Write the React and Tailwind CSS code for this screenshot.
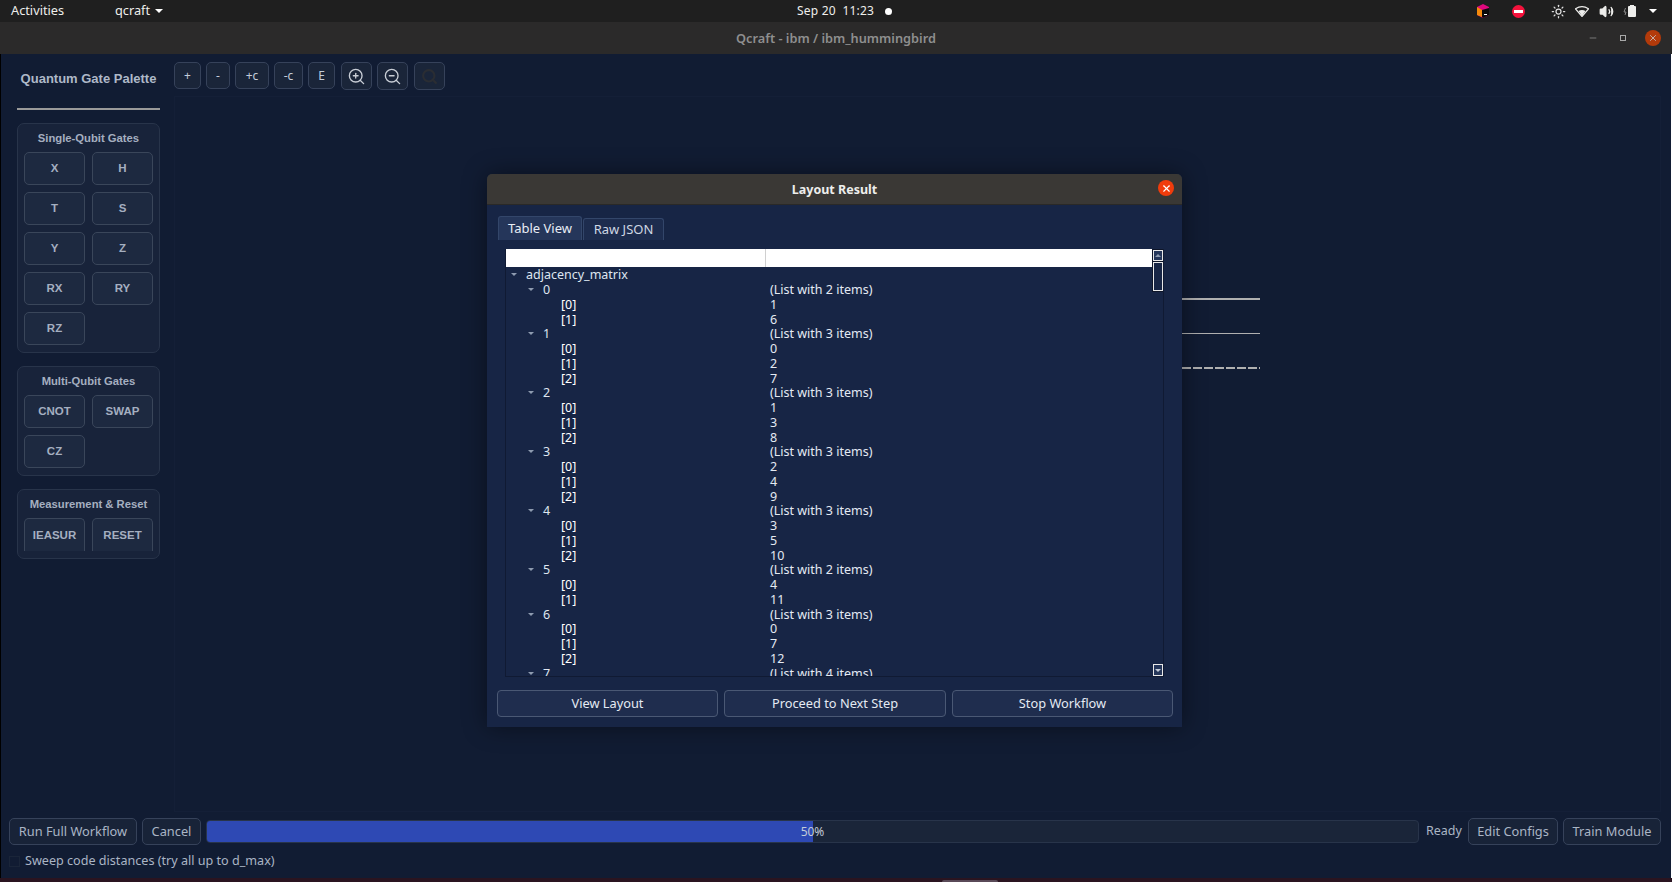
import React from "react";
import { ZoomIn, ZoomOut, Search, Sun, Volume2, X, Minus } from "lucide-react";

const ubuntu = "font-['Noto_Sans',sans-serif]";

const toolButtons = [
  { label: "+", w: "w-[27px]" },
  { label: "-", w: "w-[24px]" },
  { label: "+c", w: "w-[34px]" },
  { label: "-c", w: "w-[29px]" },
  { label: "E", w: "w-[27px]" },
];

const gateGroups = [
  { title: "Single-Qubit Gates", gates: ["X", "H", "T", "S", "Y", "Z", "RX", "RY", "RZ"] },
  { title: "Multi-Qubit Gates", gates: ["CNOT", "SWAP", "CZ"] },
  { title: "Measurement & Reset", gates: ["IEASUR", "RESET"], clipped: true },
];

const matrix = [
  [1, 6],
  [0, 2, 7],
  [1, 3, 8],
  [2, 4, 9],
  [3, 5, 10],
  [4, 11],
  [0, 7, 12],
];

const GateGroup = ({ title, gates, clipped }) => (
  <div className="border border-[#28344a] rounded-[7px] bg-[#18233a] px-[6px] pt-[6px] pb-[7px]">
    <div className="h-[16px] leading-[16px] mb-[6px] text-center text-[11.25px] font-bold text-[#a5afc0] whitespace-nowrap">
      {title}
    </div>
    <div className="grid grid-cols-2 gap-x-[7px] gap-y-[7px]">
      {gates.map((gate) => (
        <button
          key={gate}
          className={`h-[33px] w-[61px] pt-px border border-[#3a465a] rounded-[5px] bg-[#1d2940] text-[11.5px] font-bold text-[#a5afc0] ${
            clipped ? "border-b-0 rounded-b-none" : ""
          }`}
        >
          {gate}
        </button>
      ))}
    </div>
  </div>
);

const TreeRow = ({ indent, arrow, name, value, bright }) => (
  <div className="flex h-[14.75px] items-center leading-[14px] whitespace-nowrap">
    <div className={`relative w-[260px] shrink-0 ${indent}`}>
      {arrow && (
        <span className="absolute mt-[5px] -ml-[15px] w-0 h-0 border-x-[3px] border-x-transparent border-t-[3px] border-t-[#8e9bb0]" />
      )}
      <span className={bright ? "text-white" : "text-[#dfe6f0]"}>{name}</span>
    </div>
    <span className="text-[#e4eaf3] pl-[4px]">{value}</span>
  </div>
);

const ListNode = ({ index, items }) => (
  <>
    <TreeRow indent="pl-[37px]" arrow name={index} value={`(List with ${items.length} items)`} />
    {items.map((item, i) => (
      <TreeRow key={i} indent="pl-[55px]" name={`[${i}]`} value={item} bright />
    ))}
  </>
);

const DialogButton = ({ children, w }) => (
  <button className={`h-[27px] ${w} pt-px border border-[#4a5874] rounded-[4px] bg-[#1f2d4e] text-[12.8px] text-[#e4eaf3]`}>
    {children}
  </button>
);

const LayoutDialog = () => (
  <div className={`absolute left-[487px] top-[174px] w-[695px] h-[553px] flex flex-col rounded-t-[5px] bg-[#172545] shadow-[0_0_24px_rgba(0,0,0,0.45)] ${ubuntu}`}>
    <div className="relative h-[31px] pt-[2px] shrink-0 flex items-center justify-center rounded-t-[5px] bg-[#3a3835] border-b border-[#2a2927] text-[12.5px] font-bold text-[#eeeeec]">
      Layout Result
      <span className="absolute right-[8px] top-[6px] w-[16px] h-[16px] rounded-full bg-[#f13c0c] flex items-center justify-center">
        <X size={11} strokeWidth={2.5} className="text-white" />
      </span>
    </div>
    <div className="flex items-end h-[35px] shrink-0 pl-[11px] gap-[1px] text-[13px]">
      <div className="h-[24px] w-[84px] flex items-center justify-center rounded-t-[3px] border border-b-0 border-[#33466a] bg-[#25365a] text-[#e8edf5]">
        Table View
      </div>
      <div className="h-[22px] w-[81px] flex items-center justify-center rounded-t-[3px] border border-b-0 border-[#33466a] bg-[#1d2c4e] text-[#cfd7e4]">
        Raw JSON
      </div>
    </div>
    <div className="ml-[18px] mt-[9px] w-[659px] h-[428px] shrink-0 flex overflow-hidden border-r border-b border-l border-[#101a33] text-[12.5px]">
      <div className="w-[646px] shrink-0">
        <div className="flex h-[18px] mb-px bg-white">
          <div className="w-[260px] border-r border-[#d0d0d0]" />
        </div>
        <TreeRow indent="pl-[20px]" arrow name="adjacency_matrix" />
        {matrix.map((items, i) => (
          <ListNode key={i} index={i} items={items} />
        ))}
        <TreeRow indent="pl-[37px]" arrow name={7} value="(List with 4 items)" />
      </div>
      <div className="w-[11px] shrink-0 flex flex-col">
        <div className="h-[43px] pt-px bg-[#0e1528]">
          <div className="h-[11px] ml-px border border-[#e8e8e8] bg-[#25365a] flex items-center justify-center">
            <span className="w-0 h-0 border-x-[3px] border-x-transparent border-b-[3px] border-b-[#8e9bb0]" />
          </div>
          <div className="h-[29px] ml-px mt-px border border-[#e8e8e8] bg-[#172545]" />
        </div>
        <div className="flex-1" />
        <div className="h-[12px] ml-px border border-[#e8e8e8] bg-[#25365a] flex items-center justify-center">
          <span className="w-0 h-0 border-x-[3px] border-x-transparent border-t-[3px] border-t-[#c4ccd8]" />
        </div>
      </div>
    </div>
    <div className="mt-[13px] pl-[10px] flex gap-[6px]">
      <DialogButton w="w-[221px]">View Layout</DialogButton>
      <DialogButton w="w-[222px]">Proceed to Next Step</DialogButton>
      <DialogButton w="w-[221px]">Stop Workflow</DialogButton>
    </div>
  </div>
);

const BottomButton = ({ children, w }) => (
  <button className={`h-[27px] ${w} shrink-0 border border-[#36425a] rounded-[5px] bg-[#182338] text-[12.8px] text-[#aab5c5] whitespace-nowrap`}>
    {children}
  </button>
);

const SystemBar = () => (
  <div className={`relative h-[22px] shrink-0 flex items-center bg-[#1f1f1f] text-[12.75px] text-[#eeeeec] ${ubuntu}`}>
    <span className="ml-[11px] w-[104px]">Activities</span>
    <span>qcraft</span>
    <span className="ml-[5px] w-0 h-0 border-x-[4px] border-x-transparent border-t-[4px] border-t-white" />
    <div className="absolute left-[797px] top-0 h-[22px] flex items-center text-[12px]">
      <span className="tracking-[0.2px]">Sep 20&nbsp;&nbsp;11:23</span>
      <span className="ml-[11px] w-[7px] h-[7px] rounded-full bg-white" />
    </div>
    <div className="ml-auto flex items-center h-[22px]">
      <svg width="14" height="14" viewBox="0 0 14 14">
        <polygon points="7,0 13,3 13,11 7,14 1,11 1,3" fill="#e0087e" />
        <polygon points="1,3 6,6 6,13 1,11" fill="#f58a0b" />
        <polygon points="6,6 13,4 13,11 7,14 6,13" fill="#0a0a0a" />
        <rect x="8" y="10" width="3" height="1" fill="#fff" />
      </svg>
      <span className="ml-[22px] w-[13px] h-[13px] rounded-full bg-[#f3123c] flex items-center justify-center">
        <span className="w-[9px] h-[3px] bg-white" />
      </span>
      <Sun size={15} strokeWidth={2} className="ml-[26px] text-[#dedede]" />
      <svg className="ml-[9px]" width="14" height="11" viewBox="0 0 14 11">
        <path d="M0.5 2.8 Q7 -1.4 13.5 2.8 L7 10.5 Z" fill="none" stroke="#eeeeec" strokeWidth="1.2" />
        <path d="M3.5 5 Q7 3 10.5 5 L7 10 Z" fill="#eeeeec" />
      </svg>
      <Volume2 size={15} strokeWidth={2} className="ml-[10px] text-[#eeeeec] fill-current" />
      <svg className="ml-[9px]" width="14" height="14" viewBox="0 0 14 14">
        <path d="M2.5 4 L1 8 L3 8 L2 11" fill="none" stroke="#8a8a8a" strokeWidth="1" />
        <rect x="5" y="2" width="8" height="11" rx="1" fill="#eeeeec" />
        <rect x="7" y="1" width="4" height="1" fill="#eeeeec" />
      </svg>
      <span className="ml-[12px] mr-[15px] w-0 h-0 border-x-[4px] border-x-transparent border-t-[4px] border-t-white" />
    </div>
  </div>
);

const TitleBar = () => (
  <div className={`relative h-[32px] pt-[2px] shrink-0 flex items-center justify-center bg-[#2b2a2a] text-[12.75px] font-semibold text-[#8f8f8f] ${ubuntu}`}>
    Qcraft - ibm / ibm_hummingbird
    <div className="absolute right-[11px] top-[8px] flex items-center">
      <Minus size={10} strokeWidth={1.5} className="text-[#a8a8a8] mr-[22px]" />
      <span className="w-[6px] h-[6px] mr-[19px] border border-[#a8a8a8]" />
      <span className="w-[16px] h-[16px] rounded-full bg-[#b33a0a] flex items-center justify-center">
        <X size={10} strokeWidth={2} className="text-[#c8c8c8]" />
      </span>
    </div>
  </div>
);

export default function App() {
  return (
    <div className="relative w-[1672px] h-[882px] overflow-hidden flex flex-col bg-[#111c33] font-['Liberation_Sans',sans-serif]">
      <SystemBar />
      <TitleBar />
      <div className="flex-1 min-h-0 flex border-l border-l-black border-r border-r-white">
        <div className="w-[173px] shrink-0 pl-[16px] pr-[14px]">
          <div className="h-[56px] pt-[17px] border-b-2 border-[#9a9a9a] text-center text-[13px] leading-[16px] font-bold text-[#aeb8c8] whitespace-nowrap">
            Quantum Gate Palette
          </div>
          <div className="mt-[13px] flex flex-col gap-[13px]">
            {gateGroups.map((group) => (
              <GateGroup key={group.title} {...group} />
            ))}
          </div>
        </div>
        <div className="flex-1 min-w-0 pr-[10px]">
          <div className={`flex h-[42px] pt-[8px] gap-[5px] text-[12px] text-[#c3ccd9] ${ubuntu}`}>
            {toolButtons.map((b) => (
              <button key={b.label} className={`h-[27px] ${b.w} border border-[#36425a] rounded-[5px] bg-[#1a2539]`}>
                {b.label}
              </button>
            ))}
            <button className="h-[28px] w-[31px] ml-px flex items-center justify-center border border-[#36425a] rounded-[5px] bg-[#1a2539]">
              <ZoomIn size={19} strokeWidth={1.7} className="text-[#c9ced6]" />
            </button>
            <button className="h-[28px] w-[31px] flex items-center justify-center border border-[#36425a] rounded-[5px] bg-[#1a2539]">
              <ZoomOut size={19} strokeWidth={1.7} className="text-[#c9ced6]" />
            </button>
            <button className="h-[28px] w-[31px] ml-px flex items-center justify-center border border-[#36425a] rounded-[5px] bg-[#1a2539]">
              <Search size={17} strokeWidth={3} className="text-[#2a2d33]" />
            </button>
          </div>
          <div className="relative h-[716px] border border-[#141f37]">
            <div className="absolute left-[1007px] top-[201px] w-[78px] h-[2px] bg-[#b0b0b0]" />
            <div className="absolute left-[1007px] top-[236px] w-[78px] h-px bg-[#b0b0b0]" />
            <div className="absolute left-[1007px] top-[270px] w-[78px] h-[2px] bg-[repeating-linear-gradient(90deg,#b0b0b0_0_9px,transparent_9px_11px)]" />
          </div>
        </div>
      </div>
      <div className={`h-[66px] shrink-0 border-l border-l-black border-r border-r-white px-[8px] pt-[6px] ${ubuntu}`}>
        <div className="flex items-center gap-[5px]">
          <BottomButton w="w-[128px]">Run Full Workflow</BottomButton>
          <BottomButton w="w-[59px]">Cancel</BottomButton>
          <div className="relative h-[23px] w-[1213px] shrink-0 overflow-hidden border border-[#28344a] rounded-[4px] bg-[#1a2539]">
            <div className="h-full w-1/2 bg-[#2e49b4]" />
            <span className="absolute inset-0 pt-px flex items-center justify-center text-[12px] text-[#c3ccd9]">50%</span>
          </div>
          <span className="w-[39px] shrink-0 pl-[2px] text-[12.5px] text-[#aab5c5]">Ready</span>
          <BottomButton w="w-[90px]">Edit Configs</BottomButton>
          <BottomButton w="w-[98px]">Train Module</BottomButton>
        </div>
        <div className="mt-[8px] flex items-center text-[12.6px] leading-[16px] text-[#aab5c5]">
          <span className="w-[11px] h-[11px] mr-[5px] border border-[#1a2539] bg-[#111c33]" />
          Sweep code distances (try all up to d_max)
        </div>
      </div>
      <div className="h-[4px] shrink-0 bg-[#2a1420]" />
      <div className="absolute left-[942px] bottom-0 w-[56px] h-[2px] rounded-t-[2px] bg-[#5a4a58]" />
      <LayoutDialog />
    </div>
  );
}
